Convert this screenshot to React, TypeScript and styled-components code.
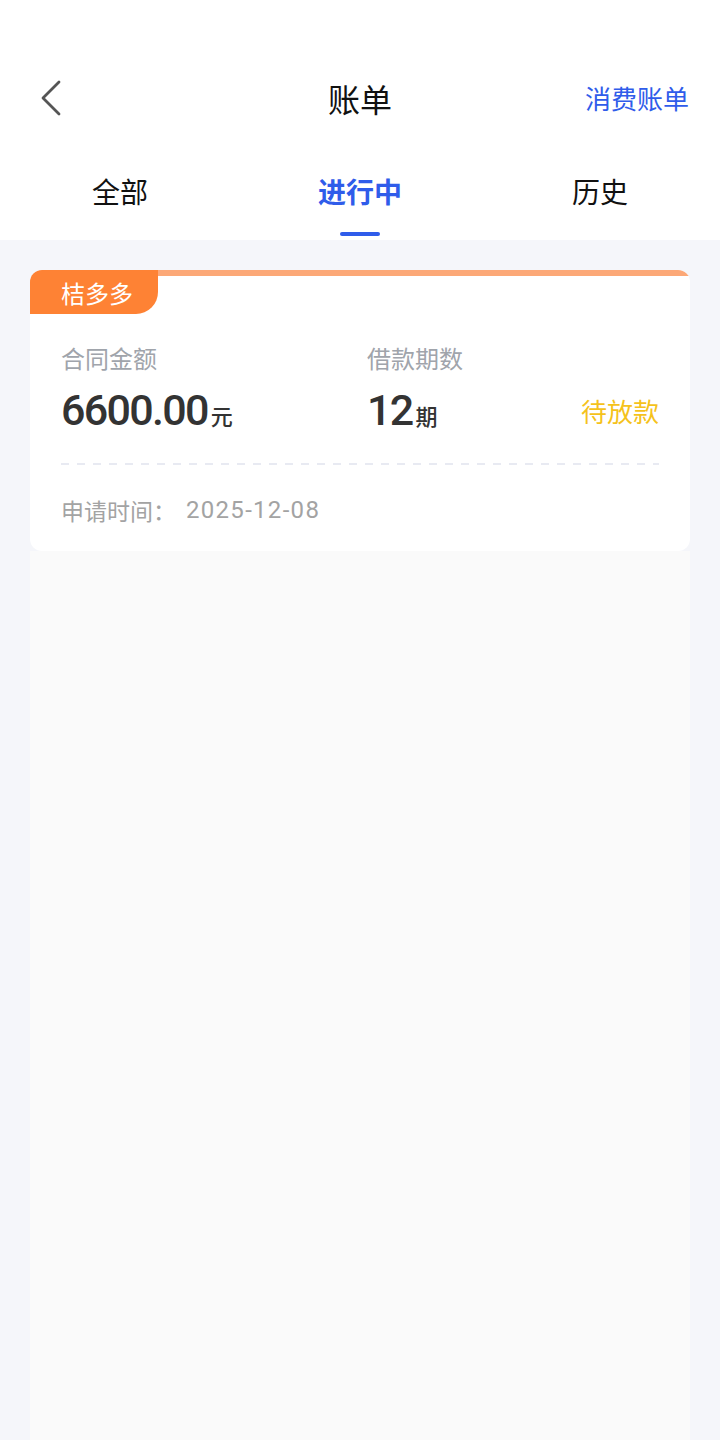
import React from "react";
import styled, { createGlobalStyle } from "styled-components";

const GlobalStyle = createGlobalStyle`
  html, body { margin: 0; padding: 0; background: #f5f6fa; }
  body { font-family: "Noto Sans CJK SC", "Noto Sans", sans-serif; }
  * { box-sizing: border-box; }
`;

const Page = styled.div`
  width: 720px;
  min-height: 1440px;
  display: flex;
  flex-direction: column;
  background: #f5f6fa;
`;

const Header = styled.header`
  background: #ffffff;
  padding-top: 60px;
`;

const NavBar = styled.div`
  height: 76px;
  display: grid;
  grid-template-columns: 1fr auto 1fr;
  align-items: center;
  padding: 0 31px;
`;

const BackButton = styled.button`
  justify-self: start;
  width: 32px;
  height: 40px;
  margin-left: 7px;
  padding: 0;
  border: none;
  background: none;
  display: flex;
  align-items: center;
  justify-content: flex-start;
`;

const Title = styled.h1`
  margin: 0;
  font-size: 32px;
  font-weight: 400;
  color: #111;
  line-height: 40px;
`;

const NavLink = styled.span`
  justify-self: end;
  font-size: 26px;
  color: #2f5cea;
  line-height: 40px;
`;

const Tabs = styled.nav`
  height: 104px;
  display: grid;
  grid-template-columns: repeat(3, 1fr);
`;

const Tab = styled.div`
  display: flex;
  flex-direction: column;
  align-items: center;
  padding-top: 35px;
`;

const TabLabel = styled.span<{ $active?: boolean }>`
  font-size: 28px;
  line-height: 40px;
  font-weight: ${(p) => (p.$active ? 700 : 400)};
  color: ${(p) => (p.$active ? "#2f5cea" : "#111")};
`;

const Indicator = styled.span<{ $active?: boolean }>`
  margin-top: 21px;
  width: 40px;
  height: 4px;
  border-radius: 2px;
  background: ${(p) => (p.$active ? "#2f5cea" : "transparent")};
`;

const Content = styled.main`
  flex: 1;
  display: flex;
  flex-direction: column;
  padding: 30px 30px 0;
`;

const Card = styled.section`
  background: #ffffff;
  border-radius: 12px;
  overflow: hidden;
`;

const CardHead = styled.div`
  display: flex;
  align-items: flex-start;
`;

const Tag = styled.span`
  width: 128px;
  height: 44px;
  display: flex;
  align-items: center;
  justify-content: center;
  padding-left: 6px;
  background: #fe8234;
  color: #fff;
  font-size: 24px;
  border-bottom-right-radius: 22px;
`;

const Stripe = styled.span`
  flex: 1;
  height: 6px;
  background: #fca877;
`;

const CardBody = styled.div`
  padding: 30px 31px 0;
`;

const InfoRow = styled.div`
  display: flex;
  align-items: flex-end;
`;

const Column = styled.div<{ $width?: number }>`
  display: flex;
  flex-direction: column;
  ${(p) => (p.$width ? `width: ${p.$width}px;` : "flex: 1;")}
`;

const Label = styled.span`
  font-size: 24px;
  line-height: 28px;
  color: #a0a4ab;
`;

const Value = styled.div`
  margin-top: 13px;
  height: 50px;
  display: flex;
  align-items: baseline;
  color: #333;
`;

const Number = styled.span`
  font-family: "Roboto", "DejaVu Sans", sans-serif;
  font-size: 43px;
  line-height: 50px;
  font-weight: 500;
  letter-spacing: -1.7px;
`;

const Unit = styled.span`
  font-size: 22px;
  font-weight: 500;
  margin-left: 3px;
`;

const Status = styled.span`
  font-size: 26px;
  line-height: 34px;
  margin-bottom: 7px;
  color: #f5c21b;
`;

const Dashed = styled.div`
  margin-top: 28px;
  height: 2px;
  background: repeating-linear-gradient(
    to right,
    #e8eaf2 0,
    #e8eaf2 8px,
    transparent 8px,
    transparent 16px
  );
`;

const Footer = styled.div`
  padding: 30px 0 26px;
  display: flex;
  align-items: center;
  font-size: 23px;
  line-height: 30px;
  color: #a3a3a3;
`;

const DateText = styled.span`
  font-family: "Roboto", sans-serif;
  font-size: 24px;
  letter-spacing: 1.3px;
  margin-left: 10px;
`;

const Filler = styled.div`
  flex: 1;
  background: #fafafa;
`;

const tabs = ["全部", "进行中", "历史"];

export default function App() {
  return (
    <>
      <GlobalStyle />
      <Page>
        <Header>
          <NavBar>
            <BackButton aria-label="返回">
              <svg width="26" height="36" viewBox="0 0 26 36" fill="none">
                <path d="M21 2 L5 18 L21 34" stroke="#555" strokeWidth="2.8" strokeLinecap="round" strokeLinejoin="round" />
              </svg>
            </BackButton>
            <Title>账单</Title>
            <NavLink>消费账单</NavLink>
          </NavBar>
          <Tabs>
            {tabs.map((t, i) => (
              <Tab key={t}>
                <TabLabel $active={i === 1}>{t}</TabLabel>
                <Indicator $active={i === 1} />
              </Tab>
            ))}
          </Tabs>
        </Header>
        <Content>
          <Card>
            <CardHead>
              <Tag>桔多多</Tag>
              <Stripe />
            </CardHead>
            <CardBody>
              <InfoRow>
                <Column $width={306}>
                  <Label>合同金额</Label>
                  <Value>
                    <Number>6600.00</Number>
                    <Unit>元</Unit>
                  </Value>
                </Column>
                <Column>
                  <Label>借款期数</Label>
                  <Value>
                    <Number>12</Number>
                    <Unit>期</Unit>
                  </Value>
                </Column>
                <Status>待放款</Status>
              </InfoRow>
              <Dashed />
              <Footer>
                申请时间：<DateText>2025-12-08</DateText>
              </Footer>
            </CardBody>
          </Card>
          <Filler />
        </Content>
      </Page>
    </>
  );
}
